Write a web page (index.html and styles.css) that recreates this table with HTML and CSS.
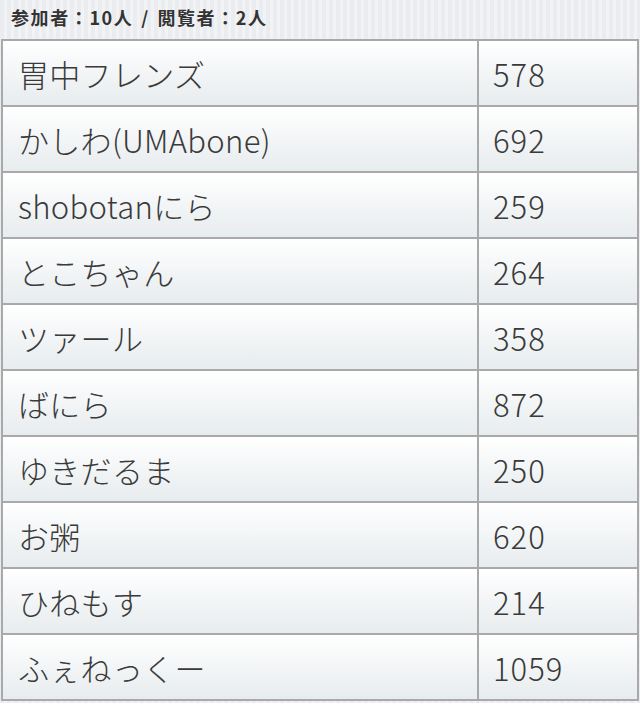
FILE: index.html
```html
<!DOCTYPE html>
<html lang="ja">
<head>
<meta charset="utf-8">
<link rel="stylesheet" href="styles.css">
</head>
<body>
<div class="header">参加者：10人 / 閲覧者：2人</div>
<div class="table">
  <div class="cell name">胃中フレンズ</div><div class="cell num">578</div>
  <div class="cell name">かしわ(UMAbone)</div><div class="cell num">692</div>
  <div class="cell name">shobotanにら</div><div class="cell num">259</div>
  <div class="cell name">とこちゃん</div><div class="cell num">264</div>
  <div class="cell name">ツァール</div><div class="cell num">358</div>
  <div class="cell name">ばにら</div><div class="cell num">872</div>
  <div class="cell name">ゆきだるま</div><div class="cell num">250</div>
  <div class="cell name">お粥</div><div class="cell num">620</div>
  <div class="cell name">ひねもす</div><div class="cell num">214</div>
  <div class="cell name">ふぇねっくー</div><div class="cell num">1059</div>
</div>
</body>
</html>
```
FILE: styles.css
```css
html, body {
  margin: 0;
  padding: 0;
}
body {
  width: 640px;
  height: 703px;
  overflow: hidden;
  font-family: "Noto Sans CJK JP", "Noto Sans", sans-serif;
  color: #3a3a3a;
  background: repeating-linear-gradient(90deg, #eaecef 0, #eaecef 4px, #f2f3f5 4px, #f2f3f5 7px);
}
.header {
  height: 39px;
  box-sizing: border-box;
  padding-left: 11px;
  padding-bottom: 5px;
  display: flex;
  align-items: center;
  font-size: 18px;
  font-weight: bold;
  letter-spacing: 1.6px;
  word-spacing: 2px;
  color: #333;
}
.table {
  margin-left: 1px;
  width: 638px;
  box-sizing: border-box;
  display: grid;
  grid-template-columns: 476px 160px;
  border-left: 2px solid #a9a9a9;
  border-top: 2px solid #a9a9a9;
}
.cell {
  height: 66px;
  box-sizing: border-box;
  border-right: 2px solid #a9a9a9;
  border-bottom: 2px solid #a9a9a9;
  background: linear-gradient(180deg, #ffffff 0%, #f5f7f8 40%, #e7ecee 100%);
  display: flex;
  align-items: center;
  font-size: 31px;
  font-weight: 300;
  line-height: 1;
  white-space: nowrap;
}
.name {
  padding-left: 15px;
  letter-spacing: 0.3px;
}
.num {
  padding-left: 14px;
  letter-spacing: 1px;
}
```
